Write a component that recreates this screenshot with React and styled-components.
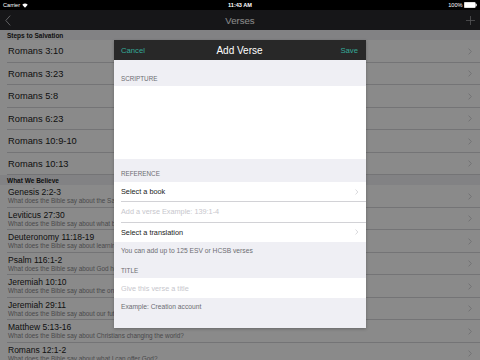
import React from "react";
import styled, { createGlobalStyle } from "styled-components";

const Global = createGlobalStyle`
  html, body { margin: 0; padding: 0; background: #000; }
  body { font-family: "Liberation Sans", Arial, sans-serif; }
  * { box-sizing: border-box; }
`;

const Screen = styled.div`
  position: relative;
  width: 480px;
  height: 360px;
  overflow: hidden;
  background: #fff;
  display: flex;
  flex-direction: column;
`;

const StatusBar = styled.div`
  height: 10px;
  flex: none;
  background: #000;
  color: #fff;
  display: grid;
  grid-template-columns: 1fr auto 1fr;
  align-items: center;
  padding: 0 3px;
  font-size: 5.6px;
`;

const StatusLeft = styled.div`
  display: flex;
  align-items: center;
  gap: 2px;
`;

const StatusTime = styled.div`
  font-weight: bold;
`;

const StatusRight = styled.div`
  display: flex;
  align-items: center;
  justify-content: flex-end;
  gap: 1.5px;
`;

const NavBar = styled.div`
  height: 20px;
  flex: none;
  background: #29292d;
  display: grid;
  grid-template-columns: 40px 1fr 40px;
  align-items: center;
  padding: 0 5px;
`;

const NavTitle = styled.div`
  text-align: center;
  color: #fff;
  font-size: 9.6px;
`;

const NavRight = styled.div`
  display: flex;
  justify-content: flex-end;
`;

const List = styled.div`
  flex: 1;
  display: flex;
  flex-direction: column;
  background: #fff;
`;

const SectionHeader = styled.div`
  height: 10px;
  flex: none;
  background: #f0f0f4;
  color: #222;
  font-weight: bold;
  font-size: 6.5px;
  display: flex;
  align-items: center;
  padding-left: 7px;
`;

const Row = styled.div`
  position: relative;
  height: 22.5px;
  flex: none;
  display: flex;
  align-items: center;
  padding: 0 8px 0 8px;
  &:not(:last-child)::after {
    content: "";
    position: absolute;
    left: 7px;
    right: 0;
    bottom: 0;
    height: 1px;
    background: #d6d6da;
  }
`;

const RowText = styled.div`
  flex: 1;
  display: flex;
  flex-direction: column;
  justify-content: center;
  min-width: 0;
  padding-top: ${(p) => (p.$sub ? "0" : "0.5px")};
`;

const RowTitle = styled.div`
  color: #222;
  font-size: ${(p) => (p.$small ? "8.5px" : "9.3px")};
  line-height: ${(p) => (p.$small ? "9px" : "11px")};
  white-space: nowrap;
`;

const RowSub = styled.div`
  color: #8a8a8e;
  font-size: 6.4px;
  line-height: 7.5px;
  white-space: nowrap;
`;

const Overlay = styled.div`
  position: absolute;
  top: 10px;
  left: 0;
  right: 0;
  bottom: 0;
  background: rgba(0, 0, 0, 0.46);
  display: flex;
  justify-content: center;
  align-items: flex-start;
  padding-top: 30px;
`;

const Modal = styled.div`
  width: 252px;
  height: 288px;
  background: #efeff4;
  display: flex;
  flex-direction: column;
  box-shadow: 0 1px 3px rgba(0, 0, 0, 0.25);
`;

const ModalHeader = styled.div`
  height: 20px;
  flex: none;
  background: #282828;
  display: grid;
  grid-template-columns: 1fr auto 1fr;
  align-items: center;
  padding: 0 8px 0 7px;
`;

const HeaderButton = styled.div`
  color: #35a898;
  font-size: 7.7px;
  text-align: ${(p) => (p.$right ? "right" : "left")};
`;

const ModalTitle = styled.div`
  color: #fff;
  font-size: 10px;
`;

const GroupLabel = styled.div`
  padding: ${(p) => p.$top}px 7px 3.5px;
  line-height: 9px;
  font-size: 6.3px;
  color: #6d6d72;
  text-transform: uppercase;
`;

const TextArea = styled.div`
  height: 73px;
  flex: none;
  background: #fff;
`;

const Group = styled.div`
  background: #fff;
  display: flex;
  flex-direction: column;
`;

const FormRow = styled.div`
  position: relative;
  height: ${(p) => p.$h || 20.25}px;
  display: flex;
  align-items: center;
  padding: 0 8px 0 7px;
  font-size: 7.3px;
  color: ${(p) => (p.$placeholder ? "#c7c7cd" : "#222")};
  &:not(:last-child)::after {
    content: "";
    position: absolute;
    left: 7px;
    right: 0;
    bottom: 0;
    height: 0.5px;
    background: #d2d2d6;
  }
`;

const FormLabel = styled.div`
  flex: 1;
`;

const Footnote = styled.div`
  padding: 3.5px 7px 0;
  line-height: 9px;
  font-size: 6.7px;
  color: #6d6d72;
`;

const Chevron = ({ color = "#c7c7cc", w = 4, h = 7 }) => (
  <svg width={w} height={h} viewBox="0 0 4 7" fill="none">
    <polyline points="0.6,0.6 3.3,3.5 0.6,6.4" stroke={color} strokeWidth="0.8" />
  </svg>
);

const Wifi = () => (
  <svg width="6" height="5" viewBox="0 0 12 9">
    <path d="M6 9 L0.5 3.2 A8 8 0 0 1 11.5 3.2 Z" fill="#fff" />
  </svg>
);

const Battery = () => (
  <svg width="13" height="6" viewBox="0 0 13 6">
    <rect x="0.3" y="0.3" width="11" height="5.4" rx="0.8" fill="#fff" stroke="#fff" strokeWidth="0.6" />
    <rect x="11.6" y="1.8" width="1.1" height="2.4" fill="#fff" />
  </svg>
);

const Back = () => (
  <svg width="6" height="11" viewBox="0 0 6 11" fill="none">
    <polyline points="5.2,0.6 0.8,5.5 5.2,10.4" stroke="#b0b0b4" strokeWidth="1" />
  </svg>
);

const Plus = () => (
  <svg width="9" height="9" viewBox="0 0 9 9" fill="none">
    <path d="M4.5 0V9M0 4.5H9" stroke="#9c9ca0" strokeWidth="0.8" />
  </svg>
);

const salvation = ["Romans 3:10", "Romans 3:23", "Romans 5:8", "Romans 6:23", "Romans 10:9-10", "Romans 10:13"];

const believe = [
  ["Genesis 2:2-3", "What does the Bible say about the Sabbath?"],
  ["Leviticus 27:30", "What does the Bible say about what belongs to God?"],
  ["Deuteronomy 11:18-19", "What does the Bible say about learning God's Word?"],
  ["Psalm 116:1-2", "What does the Bible say about God hearing our prayers?"],
  ["Jeremiah 10:10", "What does the Bible say about the only true God?"],
  ["Jeremiah 29:11", "What does the Bible say about our future?"],
  ["Matthew 5:13-16", "What does the Bible say about Christians changing the world?"],
  ["Romans 12:1-2", "What does the Bible say about what I can offer God?"],
];

export default function App() {
  return (
    <Screen>
      <Global />
      <StatusBar>
        <StatusLeft>
          <span>Carrier</span>
          <Wifi />
        </StatusLeft>
        <StatusTime>11:43 AM</StatusTime>
        <StatusRight>
          <span>100%</span>
          <Battery />
        </StatusRight>
      </StatusBar>
      <NavBar>
        <Back />
        <NavTitle>Verses</NavTitle>
        <NavRight>
          <Plus />
        </NavRight>
      </NavBar>
      <List>
        <SectionHeader>Steps to Salvation</SectionHeader>
        {salvation.map((t) => (
          <Row key={t}>
            <RowText>
              <RowTitle>{t}</RowTitle>
            </RowText>
            <Chevron />
          </Row>
        ))}
        <SectionHeader>What We Believe</SectionHeader>
        {believe.map(([t, s]) => (
          <Row key={t}>
            <RowText $sub>
              <RowTitle $small>{t}</RowTitle>
              <RowSub>{s}</RowSub>
            </RowText>
            <Chevron />
          </Row>
        ))}
      </List>
      <Overlay>
        <Modal>
          <ModalHeader>
            <HeaderButton>Cancel</HeaderButton>
            <ModalTitle>Add Verse</ModalTitle>
            <HeaderButton $right>Save</HeaderButton>
          </ModalHeader>
          <GroupLabel $top={13.5}>Scripture</GroupLabel>
          <TextArea />
          <GroupLabel $top={10}>Reference</GroupLabel>
          <Group>
            <FormRow>
              <FormLabel>Select a book</FormLabel>
              <Chevron w={3.5} h={6} />
            </FormRow>
            <FormRow $placeholder>
              <FormLabel>Add a verse Example: 139:1-4</FormLabel>
            </FormRow>
            <FormRow>
              <FormLabel>Select a translation</FormLabel>
              <Chevron w={3.5} h={6} />
            </FormRow>
          </Group>
          <Footnote>You can add up to 125 ESV or HCSB verses</Footnote>
          <GroupLabel $top={11}>Title</GroupLabel>
          <Group>
            <FormRow $placeholder $h={20}>
              <FormLabel>Give this verse a title</FormLabel>
            </FormRow>
          </Group>
          <Footnote>Example: Creation account</Footnote>
        </Modal>
      </Overlay>
    </Screen>
  );
}
